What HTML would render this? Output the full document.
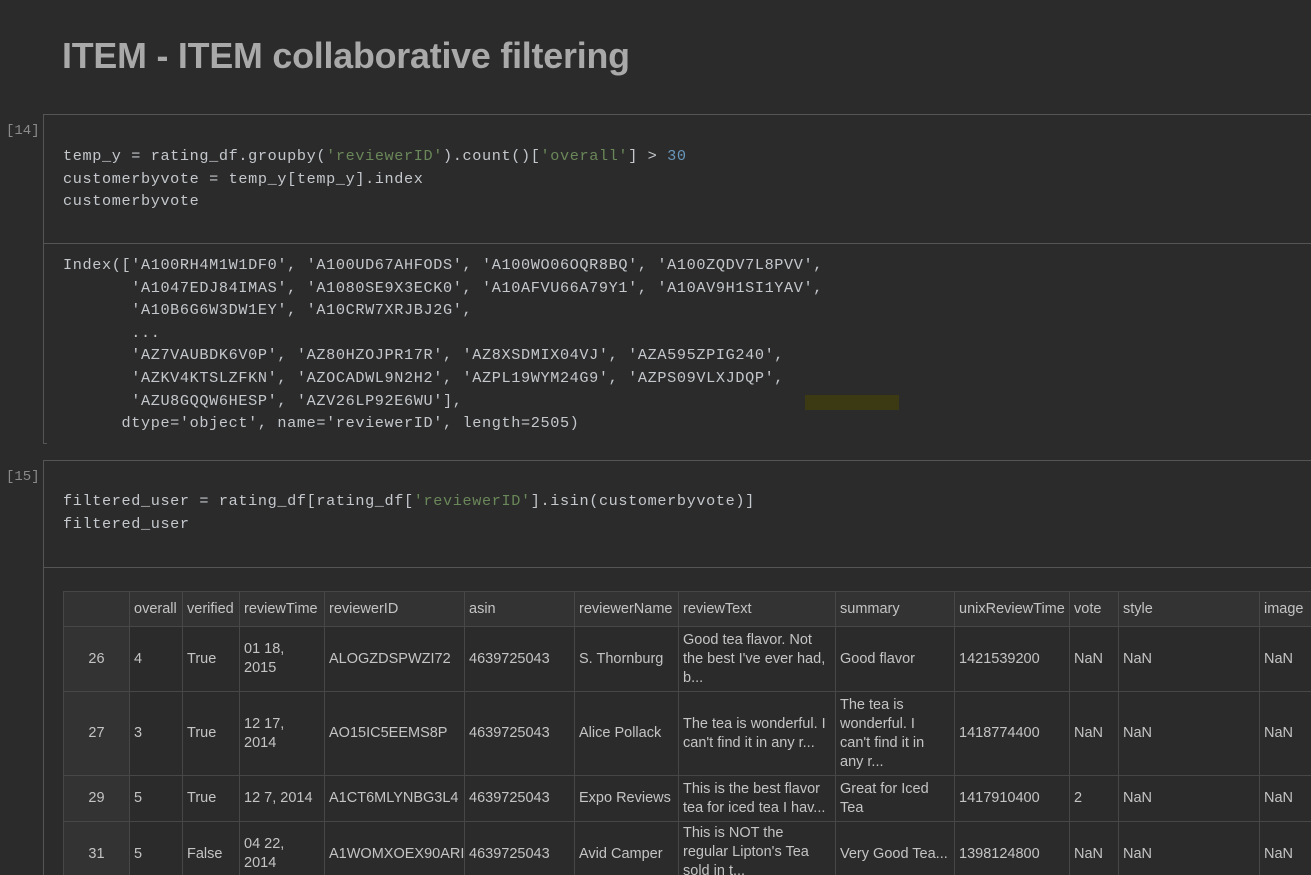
<!DOCTYPE html>
<html><head><meta charset="utf-8"><style>
html,body{margin:0;padding:0;background:#2b2b2b;width:1311px;height:875px;overflow:hidden;position:relative}
.a{position:absolute}
h1{position:absolute;left:62px;top:36px;margin:0;font:bold 35.8px "Liberation Sans",sans-serif;color:#a9a9a9;letter-spacing:-0.2px}
.num{position:absolute;font:14px "Liberation Mono",monospace;color:#8a8a8a}
.code{position:absolute;left:63px;font:15.2px "Liberation Mono",monospace;letter-spacing:0.63px;color:#c4c8cc;white-space:pre;line-height:22.6px}
.s{color:#6a8759}.n{color:#6897bb}
table{position:absolute;left:63px;top:591px;width:1300px;border-collapse:collapse;table-layout:fixed;font:14.5px "Liberation Sans",sans-serif;color:#c4c4c4}
td,th{border:1px solid #474747;padding:2px 4px;font-weight:normal;text-align:left;vertical-align:middle;line-height:19px;overflow:hidden}
th{background:#333;height:30px}
td.i{background:#333;text-align:center}
</style></head><body>
<h1>ITEM - ITEM collaborative filtering</h1>

<div class="num" style="left:6px;top:123px">[14]</div>
<div class="a" style="left:43px;top:114px;width:1268px;height:1px;background:#555"></div>
<div class="a" style="left:43px;top:114px;width:1px;height:330px;background:#555"></div>
<div class="a" style="left:43px;top:243px;width:1268px;height:1px;background:#555"></div>
<div class="a" style="left:43px;top:443px;width:4px;height:1px;background:#555"></div>
<div class="code" style="top:145px">temp_y = rating_df.groupby(<span class="s">'reviewerID'</span>).count()[<span class="s">'overall'</span>] &gt; <span class="n">30</span>
customerbyvote = temp_y[temp_y].index
customerbyvote</div>
<div class="code" style="top:254px">Index(['A100RH4M1W1DF0', 'A100UD67AHFODS', 'A100WO06OQR8BQ', 'A100ZQDV7L8PVV',
       'A1047EDJ84IMAS', 'A1080SE9X3ECK0', 'A10AFVU66A79Y1', 'A10AV9H1SI1YAV',
       'A10B6G6W3DW1EY', 'A10CRW7XRJBJ2G',
       ...
       'AZ7VAUBDK6V0P', 'AZ80HZOJPR17R', 'AZ8XSDMIX04VJ', 'AZA595ZPIG240',
       'AZKV4KTSLZFKN', 'AZOCADWL9N2H2', 'AZPL19WYM24G9', 'AZPS09VLXJDQP',
       'AZU8GQQW6HESP', 'AZV26LP92E6WU'],
      dtype='object', name='reviewerID', length=2505)</div>
<div class="a" style="left:805px;top:395px;width:94px;height:15px;background:#3b3a12"></div>

<div class="num" style="left:6px;top:469px">[15]</div>
<div class="a" style="left:43px;top:460px;width:1268px;height:1px;background:#555"></div>
<div class="a" style="left:43px;top:460px;width:1px;height:415px;background:#555"></div>
<div class="a" style="left:43px;top:567px;width:1268px;height:1px;background:#555"></div>
<div class="code" style="top:490px">filtered_user = rating_df[rating_df[<span class="s">'reviewerID'</span>].isin(customerbyvote)]
filtered_user</div>

<table>
<colgroup><col style="width:66px"><col style="width:53px"><col style="width:57px"><col style="width:85px"><col style="width:140px"><col style="width:110px"><col style="width:104px"><col style="width:157px"><col style="width:119px"><col style="width:115px"><col style="width:49px"><col style="width:141px"><col style="width:104px"></colgroup>
<tr><th></th><th>overall</th><th>verified</th><th>reviewTime</th><th>reviewerID</th><th>asin</th><th>reviewerName</th><th>reviewText</th><th>summary</th><th>unixReviewTime</th><th>vote</th><th>style</th><th>image</th></tr>
<tr style="height:65px"><td class="i">26</td><td>4</td><td>True</td><td>01 18, 2015</td><td>ALOGZDSPWZI72</td><td>4639725043</td><td>S. Thornburg</td><td>Good tea flavor. Not the best I've ever had, b...</td><td>Good flavor</td><td>1421539200</td><td>NaN</td><td>NaN</td><td>NaN</td></tr>
<tr style="height:84px"><td class="i">27</td><td>3</td><td>True</td><td>12 17, 2014</td><td>AO15IC5EEMS8P</td><td>4639725043</td><td>Alice Pollack</td><td>The tea is wonderful. I can't find it in any r...</td><td>The tea is<br>wonderful. I<br>can't find it in<br>any r...</td><td>1418774400</td><td>NaN</td><td>NaN</td><td>NaN</td></tr>
<tr style="height:46px"><td class="i">29</td><td>5</td><td>True</td><td style="white-space:nowrap">12 7, 2014</td><td>A1CT6MLYNBG3L4</td><td>4639725043</td><td>Expo Reviews</td><td>This is the best flavor tea for iced tea I hav...</td><td>Great for Iced Tea</td><td>1417910400</td><td>2</td><td>NaN</td><td>NaN</td></tr>
<tr style="height:65px"><td class="i">31</td><td>5</td><td>False</td><td>04 22, 2014</td><td>A1WOMXOEX90ARI</td><td>4639725043</td><td>Avid Camper</td><td style="vertical-align:top">This is NOT the regular Lipton's Tea sold in t...</td><td>Very Good Tea...</td><td>1398124800</td><td>NaN</td><td>NaN</td><td>NaN</td></tr>
</table>
</body></html>
